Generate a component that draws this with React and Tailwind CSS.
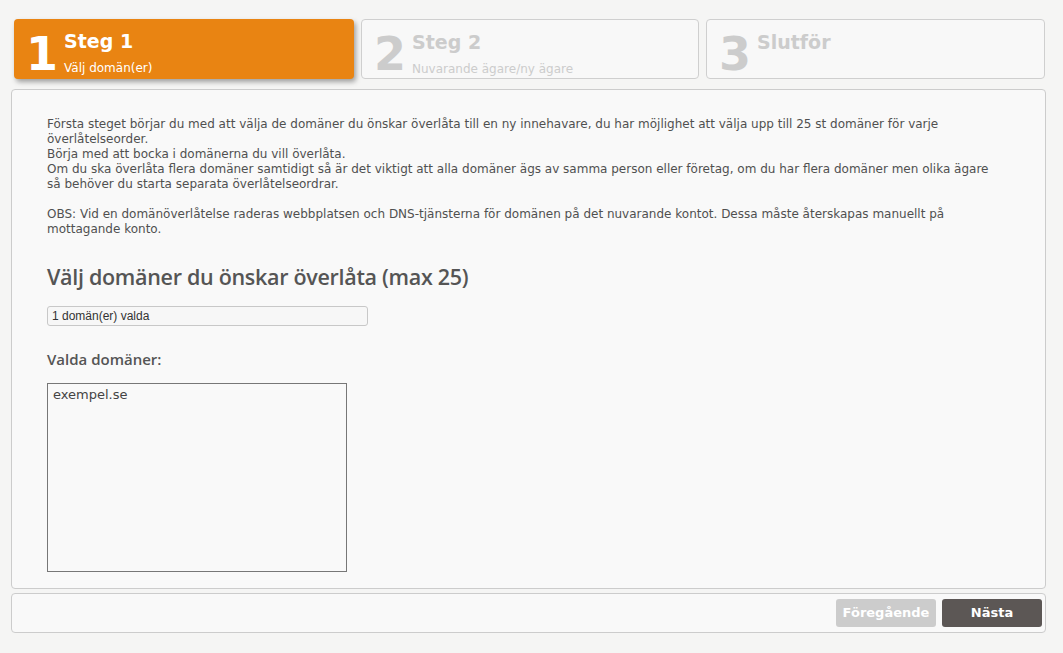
import React from 'react'

const steps = [
  { n: '1', title: 'Steg 1', sub: 'Välj domän(er)', active: true, w: 'w-[340px]' },
  { n: '2', title: 'Steg 2', sub: 'Nuvarande ägare/ny ägare', w: 'w-[338px]' },
  { n: '3', title: 'Slutför', sub: '', w: 'w-[339px]' },
]

const verdana = { fontFamily: '"DejaVu Sans", Verdana, sans-serif' }

const Step = ({ n, title, sub, active, w }) => (
  <div
    className={`${w} h-[60px] rounded-[4px] flex items-start pl-[12px] ${
      active
        ? 'bg-[#e98412] text-white shadow-[2px_3px_5px_rgba(0,0,0,0.35)]'
        : 'bg-[#f8f8f8] border border-[#cfcfcf] text-[#cccccc]'
    }`}
  >
    <div className={`text-[46px] font-bold leading-none ${active ? 'mt-[12px]' : 'mt-[11px]'}`}>{n}</div>
    <div className="ml-[6px] mt-[9px] flex flex-col">
      <div className="text-[19px] font-bold leading-[26px]">{title}</div>
      <div className="text-[12px] leading-[16px] mt-[6px]">{sub}</div>
    </div>
  </div>
)

export default function App() {
  return (
    <div className="min-h-[653px] w-[1063px] bg-[#f5f5f4] text-[#4d4d4d]" style={verdana}>
      <div className="pl-[14px] pt-[19px] flex gap-[7px]">
        {steps.map(s => <Step key={s.n} {...s} />)}
      </div>

      <div className="ml-[11px] mr-[17px] mt-[10px] h-[500px] bg-[#f9f9f9] border border-[#cccccc] rounded-[4px] pl-[35px] pt-[27px]">
        <div className="text-[12px] leading-[15px] pr-[40px] text-[#505050]">
          <p>Första steget börjar du med att välja de domäner du önskar överlåta till en ny innehavare, du har möjlighet att välja upp till 25 st domäner för varje överlåtelseorder.</p>
          <p>Börja med att bocka i domänerna du vill överlåta.</p>
          <p>Om du ska överlåta flera domäner samtidigt så är det viktigt att alla domäner ägs av samma person eller företag, om du har flera domäner men olika ägare så behöver du starta separata överlåtelseordrar.</p>
          <p className="mt-[15px]">OBS: Vid en domänöverlåtelse raderas webbplatsen och DNS-tjänsterna för domänen på det nuvarande kontot. Dessa måste återskapas manuellt på mottagande konto.</p>
        </div>

        <h2
          className="mt-[25px] text-[21.5px] font-semibold leading-[30px] text-[#555] tracking-[-0.3px]"
          style={{ fontFamily: '"Open Sans", sans-serif' }}
        >
          Välj domäner du önskar överlåta (max 25)
        </h2>

        <div
          className="mt-[14px] w-[321px] h-[20px] border border-[#c8c8c8] rounded-[3px] bg-[#f7f7f7] text-[12px] leading-[18px] pl-[4px] text-[#333]"
          style={{ fontFamily: '"Liberation Sans", Arial, sans-serif' }}
        >
          1 domän(er) valda
        </div>

        <h3
          className="mt-[22px] text-[15px] font-semibold leading-[22px] text-[#555]"
          style={{ fontFamily: '"Open Sans", sans-serif' }}
        >
          Valda domäner:
        </h3>

        <div className="mt-[13px] w-[300px] h-[189px] border border-[#777] bg-[#f9f9f9] text-[13px] leading-[16px] px-[5px] pt-[3px] text-[#444]">
          exempel.se
        </div>
      </div>

      <div className="ml-[11px] mr-[17px] mt-[4px] h-[40px] bg-[#f9f9f9] border border-[#cccccc] rounded-[4px] flex items-center justify-end gap-[6px] pr-[3px]">
        <button className="w-[100px] h-[28px] rounded-[3px] bg-[#cccccc] text-white text-[13px] font-bold">Föregående</button>
        <button className="w-[100px] h-[28px] rounded-[3px] bg-[#5c5755] text-white text-[13px] font-bold">Nästa</button>
      </div>
    </div>
  )
}
